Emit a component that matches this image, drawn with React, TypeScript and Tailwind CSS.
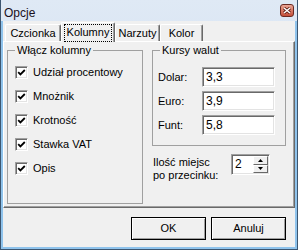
import React from 'react';

const sunken =
    'border border-t-[#a0a0a0] border-l-[#a0a0a0] border-r-white border-b-white bg-white shadow-[inset_1px_1px_0_#696969,inset_-1px_-1px_0_#e3e3e3]';

const tabs = [
    { label: 'Czcionka', w: 'w-[56px]' },
    { label: 'Kolumny', w: 'w-[54px]' },
    { label: 'Narzuty', w: 'w-[45px]' },
    { label: 'Kolor', w: 'w-[43px]' },
];

const columns = ['Udział procentowy', 'Mnożnik', 'Krotność', 'Stawka VAT', 'Opis'];

const rates = [
    { label: 'Dolar:', value: '3,3' },
    { label: 'Euro:', value: '3,9' },
    { label: 'Funt:', value: '5,8' },
];

function CheckBox() {
    return (
        <span className={`flex h-[13px] w-[13px] shrink-0 items-center justify-center ${sunken}`}>
            <svg width="9" height="9" viewBox="0 0 9 9">
                <path d="M1.2 4.2L3.4 6.4L7.8 2" fill="none" stroke="#000" strokeWidth="1.8" />
            </svg>
        </span>
    );
}

function CloseButton() {
    return (
        <div className="mt-[4px] flex h-[13px] w-[14px] items-center justify-center rounded-[3px] border border-[#6b2a22] bg-gradient-to-b from-[#eaa595] to-[#c44d38]">
            <svg width="8" height="7" viewBox="0 0 8 7">
                <path d="M1 1L7 6M7 1L1 6" stroke="#5b1b12" strokeWidth="3" />
                <path d="M1 1L7 6M7 1L1 6" stroke="#fff" strokeWidth="1.5" />
            </svg>
        </div>
    );
}

function Spinner() {
    return (
        <div className={`flex h-[21px] w-[39px] items-center pl-[3px] pr-[1px] ${sunken}`}>
            <span className="flex-1 text-[12px]">2</span>
            <div className="flex h-[17px] w-[15px] flex-col">
                <div className="flex flex-1 items-center justify-center border border-t-white border-l-white border-r-[#696969] border-b-[#696969] bg-[#f0f0f0]">
                    <svg width="5" height="3" viewBox="0 0 5 3"><path d="M2.5 0L5 3H0z" fill="#000" /></svg>
                </div>
                <div className="flex flex-1 items-center justify-center border border-t-white border-l-white border-r-[#696969] border-b-[#696969] bg-[#f0f0f0]">
                    <svg width="5" height="3" viewBox="0 0 5 3"><path d="M0 0H5L2.5 3z" fill="#000" /></svg>
                </div>
            </div>
        </div>
    );
}

export default function App() {
    return (
        <div className="flex h-[250px] w-[298px] flex-col border-x border-b border-[#3d5670] bg-gradient-to-b from-[#dfe9f5] to-[#c6d8ee] font-['Liberation_Sans',Arial,sans-serif] text-[11px] leading-[13px] text-black">
            {/* Title bar */}
            <div className="flex h-[21px] shrink-0 items-start justify-between pl-[3px] pr-[3px]">
                <span className="pt-[6px] text-[12px] leading-[14px] text-[#1a1020]">Opcje</span>
                <CloseButton />
            </div>

            {/* Frame */}
            <div className="flex flex-1 bg-[#8fc3ec] px-[2px] pb-[2px]">
                <div className="flex flex-1 flex-col bg-[#f0f0f0]">
                    {/* Tabs */}
                    <div className="flex h-[20px] items-end pl-[2px]">
                        {tabs.map(t =>
                            t.label === 'Kolumny' ? (
                                <div
                                    key={t.label}
                                    className={`${t.w} relative z-10 -mb-px flex h-[20px] items-center justify-center rounded-t-[2px] border border-b-0 border-t-white border-l-white border-r-[#696969] bg-[#f0f0f0] shadow-[inset_-1px_0_0_#a0a0a0]`}
                                >
                                    <span className="flex h-[16px] items-center px-[2px] outline-1 outline-dotted outline-black">
                                        {t.label}
                                    </span>
                                </div>
                            ) : (
                                <div
                                    key={t.label}
                                    className={`${t.w} flex h-[17px] items-center justify-center rounded-t-[2px] border border-b-0 border-t-white border-l-white border-r-[#696969] shadow-[inset_-1px_0_0_#a0a0a0]`}
                                >
                                    {t.label}
                                </div>
                            )
                        )}
                    </div>

                    {/* Tab panel */}
                    <div className="flex h-[167px] border border-t-white border-l-white border-r-[#696969] border-b-[#696969] pl-[3px] pt-[2px] shadow-[inset_-1px_-1px_0_#a0a0a0]">
                        <fieldset className="h-[160px] w-[136px] border border-[#a0a0a0]">
                            <legend className="ml-[7px] px-[2px]">Włącz kolumny</legend>
                            <div className="flex flex-col pl-[7px] pt-[3px]">
                                {columns.map(c => (
                                    <label key={c} className="flex h-[24px] items-center gap-[5px]">
                                        <CheckBox />
                                        <span>{c}</span>
                                    </label>
                                ))}
                            </div>
                        </fieldset>

                        <div className="ml-[9px] flex flex-col">
                            <fieldset className="h-[102px] w-[134px] border border-[#a0a0a0]">
                                <legend className="ml-[7px] px-[2px]">Kursy walut</legend>
                                <div className="flex flex-col gap-[4px] pl-[5px] pt-[10px]">
                                    {rates.map(r => (
                                        <div key={r.label} className="flex items-center">
                                            <span className="w-[44px]">{r.label}</span>
                                            <div className={`flex h-[20px] w-[73px] items-center pl-[3px] text-[12px] ${sunken}`}>
                                                {r.value}
                                            </div>
                                        </div>
                                    ))}
                                </div>
                            </fieldset>

                            <div className="mt-[8px] flex items-start pl-[1px]">
                                <span className="w-[78px] pt-[2px] leading-[13px]">
                                    Ilość miejsc
                                    <br />
                                    po przecinku:
                                </span>
                                <Spinner />
                            </div>
                        </div>
                    </div>

                    {/* Buttons */}
                    <div className="flex flex-1 justify-end gap-[5px] pr-[9px] pt-[9px]">
                        <button className="h-[23px] w-[75px] border border-black bg-[#f0f0f0] shadow-[inset_1px_1px_0_#fff,inset_-1px_-1px_0_#a0a0a0]">
                            OK
                        </button>
                        <button className="h-[23px] w-[75px] border border-black bg-[#f0f0f0] shadow-[inset_1px_1px_0_#fff,inset_-1px_-1px_0_#a0a0a0]">
                            Anuluj
                        </button>
                    </div>
                </div>
            </div>
        </div>
    );
}
